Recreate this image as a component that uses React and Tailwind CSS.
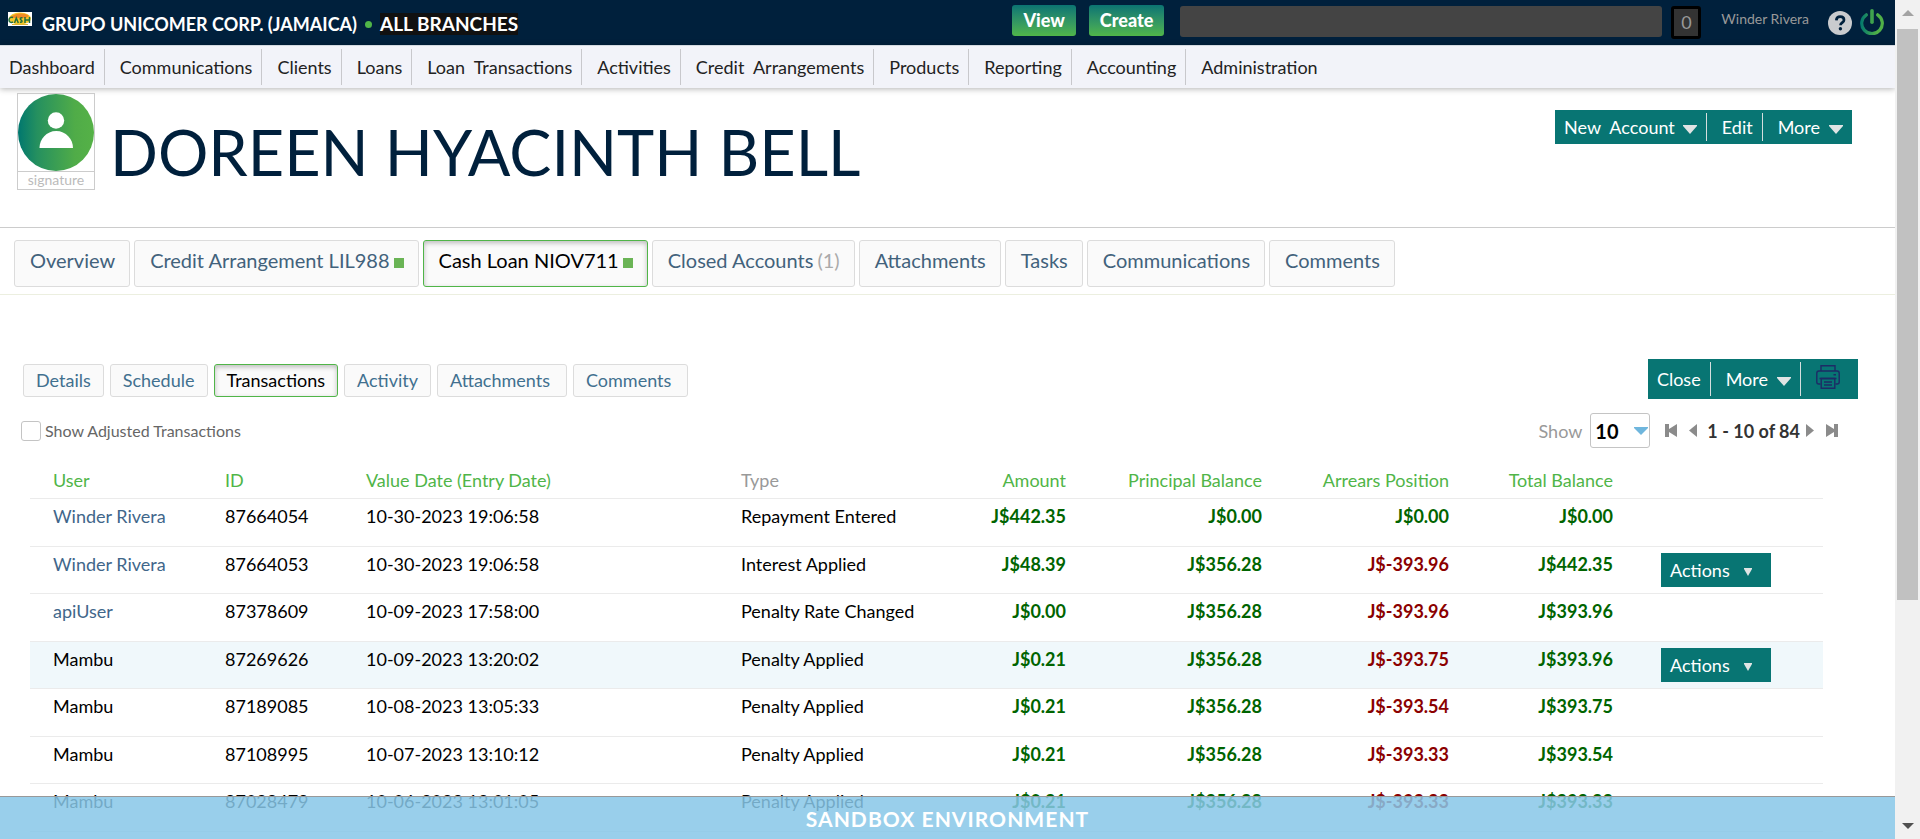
import React from "react";

const navItems = [
  "Dashboard",
  "Communications",
  "Clients",
  "Loans",
  "Loan\u00a0 Transactions",
  "Activities",
  "Credit\u00a0 Arrangements",
  "Products",
  "Reporting",
  "Accounting",
  "Administration",
];

const accountTabs = [
  { label: "Overview" },
  { label: "Credit Arrangement LIL988", status: true },
  { label: "Cash Loan NIOV711", status: true, active: true },
  { label: "Closed Accounts", count: "(1)" },
  { label: "Attachments" },
  { label: "Tasks" },
  { label: "Communications" },
  { label: "Comments" },
];

const loanTabs = [
  { label: "Details" },
  { label: "Schedule" },
  { label: "Transactions", active: true },
  { label: "Activity" },
  { label: "Attachments", wide: true },
  { label: "Comments", wide: true },
];

const rows = [
  { user: "Winder Rivera", link: true, id: "87664054", date: "10-30-2023 19:06:58", type: "Repayment Entered", amount: "J$442.35", principal: "J$0.00", arrears: "J$0.00", total: "J$0.00" },
  { user: "Winder Rivera", link: true, id: "87664053", date: "10-30-2023 19:06:58", type: "Interest Applied", amount: "J$48.39", principal: "J$356.28", arrears: "J$-393.96", total: "J$442.35", actions: true },
  { user: "apiUser", link: true, id: "87378609", date: "10-09-2023 17:58:00", type: "Penalty Rate Changed", amount: "J$0.00", principal: "J$356.28", arrears: "J$-393.96", total: "J$393.96" },
  { user: "Mambu", id: "87269626", date: "10-09-2023 13:20:02", type: "Penalty Applied", amount: "J$0.21", principal: "J$356.28", arrears: "J$-393.75", total: "J$393.96", actions: true, hover: true },
  { user: "Mambu", id: "87189085", date: "10-08-2023 13:05:33", type: "Penalty Applied", amount: "J$0.21", principal: "J$356.28", arrears: "J$-393.54", total: "J$393.75" },
  { user: "Mambu", id: "87108995", date: "10-07-2023 13:10:12", type: "Penalty Applied", amount: "J$0.21", principal: "J$356.28", arrears: "J$-393.33", total: "J$393.54" },
  { user: "Mambu", id: "87028479", date: "10-06-2023 13:01:05", type: "Penalty Applied", amount: "J$0.21", principal: "J$356.28", arrears: "J$-393.33", total: "J$393.33" },
];

function Caret({ className }) {
  return (
    <svg viewBox="0 0 14 9" className={className} preserveAspectRatio="none" aria-hidden="true">
      <path d="M0 0h14v1L7 9 0 1z" fill="currentColor" />
    </svg>
  );
}

function CashLogo() {
  return (
    <svg viewBox="0 0 24 14" className="h-3.5 w-6 shrink-0" aria-hidden="true">
      <rect width="24" height="14" fill="#fff" />
      <ellipse cx="12" cy="6.5" rx="11" ry="6" fill="#f5c92a" />
      <path d="M3 5c3-4 14-5 18-1l-3 2H5z" fill="#f08a24" />
      <path d="M5 5.5c-2.500-.8-4 .6-4 2.500s2 3 4 2M6.500 11l1.800-5 2 5M14.500 6c-2-.8-3 .8-1.500 1.800s1.500 3-1 2.200M17 5v6M21.500 5v6M17 8h4.500" fill="none" stroke="#24703c" strokeWidth="1.500" />
      <path d="M4 12.500h16" stroke="#e0b32e" strokeWidth="1" />
    </svg>
  );
}

function HelpIcon() {
  return (
    <svg viewBox="0 0 24 24" className="size-6" aria-hidden="true">
      <circle cx="12" cy="12" r="12" fill="#c9cbce" />
      <path d="M8.300 9.300c.2-2.400 1.800-3.600 3.900-3.600 2.200 0 3.800 1.300 3.800 3.200 0 2.700-3.500 2.700-3.500 5.300" fill="none" stroke="#00203c" strokeWidth="2.700" />
      <circle cx="12.400" cy="17.800" r="1.700" fill="#00203c" />
    </svg>
  );
}

function PowerIcon() {
  return (
    <svg viewBox="0 0 24 26" className="h-[26px] w-6" aria-hidden="true">
      <defs>
        <linearGradient id="power" x1="0" x2="24" y1="0" y2="0" gradientUnits="userSpaceOnUse">
          <stop offset="0" stopColor="#00776f" />
          <stop offset="0.700" stopColor="#50b047" />
        </linearGradient>
      </defs>
      <path d="M6.300 5.800a10.300 10.300 0 1 0 11.400 0" fill="none" stroke="url(#power)" strokeWidth="3.200" strokeLinecap="round" />
      <rect x="10.200" y="0" width="3.600" height="15" rx="1.800" fill="#3fa24e" />
    </svg>
  );
}

function Avatar() {
  return (
    <svg viewBox="0 0 76 77" className="block h-[77px] w-[76px]" aria-hidden="true">
      <defs>
        <linearGradient id="avatar" x1="0" x2="1" y1="0" y2="0">
          <stop offset="0" stopColor="#00776f" />
          <stop offset="0.250" stopColor="#25905f" />
          <stop offset="0.750" stopColor="#50ac48" />
          <stop offset="1" stopColor="#55b147" />
        </linearGradient>
      </defs>
      <ellipse cx="38" cy="38.500" rx="38" ry="38.500" fill="url(#avatar)" />
      <circle cx="38" cy="26.500" r="8.200" fill="#fff" />
      <path d="M21.500 54c0-9 7-17 16.700-17S55 45 55 54z" fill="#fff" />
    </svg>
  );
}

function PrinterIcon() {
  return (
    <svg viewBox="0 0 24 24" className="size-6" fill="none" stroke="#1d2b66" strokeWidth="1.400" aria-hidden="true">
      <path d="M5 6V.8h14V6" />
      <path d="M4.500 19H2.800C1.500 19 .8 18.200.8 17V8.200C.8 6.800 1.500 6 2.800 6h18.400c1.300 0 2 .8 2 2.200V17c0 1.200-.7 2-2 2h-1.700" />
      <path d="M5.200 13.500h13.600v9.700H5.200z" />
      <path d="M3.500 13.500h17M8 17h8M8 20h8M17.500 9.800h2.500" />
    </svg>
  );
}

function PagerIcon({ first, flip }) {
  return (
    <svg viewBox="0 0 12 13" className={first ? "h-[13px] w-3" : "h-[13px] w-2"} preserveAspectRatio="none" aria-hidden="true">
      <g fill="#8b8b8b" transform={flip ? "translate(12 0) scale(-1 1)" : undefined}>
        {first ? <path d="M0 0h4v5l8-5v13l-8-5v5H0z" /> : <path d="M12 0v13L0 6.500z" />}
      </g>
    </svg>
  );
}

function Header() {
  return (
    <header className="flex h-[45px] items-start bg-[#00203c] pr-[11px] text-white">
      <div className="flex min-w-0 flex-1 items-center pl-2 pt-3">
        <div className="self-start">
          <CashLogo />
        </div>
        <span className="ml-2.5 text-lg font-bold leading-6 whitespace-nowrap">GRUPO UNICOMER CORP. (JAMAICA)</span>
        <span className="mx-2 size-[7px] rounded-full bg-[#50b548]" />
        <span className="bg-[#111] text-[19px] font-bold leading-[22px] whitespace-nowrap">ALL BRANCHES</span>
      </div>
      <div className="flex items-start pt-[5px]">
        <button className="h-[31px] rounded-[3px] bg-linear-to-b from-[#0a7472] to-[#50b548] px-[11px] text-lg font-black leading-[31px]">View</button>
        <button className="ml-[13px] h-[31px] rounded-[3px] bg-linear-to-b from-[#0a7472] to-[#50b548] px-[11px] text-lg font-black leading-[31px]">Create</button>
        <input aria-label="Search" className="ml-4 mt-px h-[31px] w-[482px] rounded-[3px] bg-[#444] px-2 text-base text-white outline-none" />
        <button aria-label="Notifications" className="ml-[9px] mt-px h-[33px] w-[30px] rounded-[3px] border-3 border-black bg-[#333] text-lg leading-[27px] text-[#999]">0</button>
        <a href="#profile" className="ml-5 mt-[3px] text-sm leading-[22px] whitespace-nowrap text-[#999]">Winder Rivera</a>
        <button aria-label="Help" className="ml-[19px] mt-1.5"><HelpIcon /></button>
        <button aria-label="Log out" className="ml-2 mt-1"><PowerIcon /></button>
      </div>
    </header>
  );
}

function Nav() {
  return (
    <nav className="flex h-[43px] border-t border-[#d3d9e0] bg-[#f2f3f9] pt-[3px] shadow-[0_1px_6px_rgba(0,0,0,0.3)]">
      {navItems.map((item) => (
        <a key={item} href="#nav" className="h-9 border-r border-[#c8c8cc] pl-[15px] pr-[9px] text-lg leading-9 whitespace-nowrap text-[#222] first:pl-[9px] last:border-r-0">
          {item}
        </a>
      ))}
    </nav>
  );
}

function Profile() {
  return (
    <section className="flex items-start border-b border-[#ccc] pb-9 pl-[17px] pr-[43px] pt-[5px]">
      <div className="w-[78px] shrink-0">
        <div className="border border-[#ccc]"><Avatar /></div>
        <div className="-mt-px h-[19px] border border-[#ccc] text-center text-sm leading-4 text-[#bbb]">signature</div>
      </div>
      <h1 className="ml-[15px] flex-1 pt-5 text-[63px] leading-[78px] text-[#00203c]">DOREEN HYACINTH BELL</h1>
      <div className="mt-[17px] flex h-[34px] items-center bg-[#087573] text-lg text-white">
        <button className="flex h-7 items-center gap-2 border-r border-[#d5dede] px-[9px] whitespace-nowrap">
          {"New\u00a0 Account"}
          <Caret className="mt-1 h-[9px] w-3.5 text-[#e0e4e4]" />
        </button>
        <button className="h-7 border-r border-[#d5dede] pl-[15px] pr-[9px]">Edit</button>
        <button className="flex h-7 items-center gap-[9px] pl-[15px] pr-[9px]">
          More
          <Caret className="mt-1 h-[9px] w-3.5 text-[#e0e4e4]" />
        </button>
      </div>
    </section>
  );
}

function AccountTabs() {
  return (
    <div role="tablist" className="flex gap-1 border-b border-[#ecefe0] px-3.5 pb-[7px] pt-3">
      {accountTabs.map((t) => (
        <button
          key={t.label}
          role="tab"
          aria-selected={Boolean(t.active)}
          className={
            t.active
              ? "flex h-[47px] items-center rounded-[3px] border border-[#50b548] bg-[#fafafa] pl-[15px] pr-3.5 pb-2 text-xl whitespace-nowrap text-black shadow-[inset_0_2px_5px_rgba(0,0,0,0.25)]"
              : "flex h-[47px] items-center rounded-[3px] border border-[#dcdcdc] bg-[#fafafa] pl-[15px] pr-3.5 pb-2 text-xl whitespace-nowrap text-[#42627c]"
          }
        >
          {t.label}
          {t.count && <span className="ml-1 text-[#aaa]">{t.count}</span>}
          {t.status && <span className="ml-1 mt-1.5 size-2.5 bg-[#6ab455]" />}
        </button>
      ))}
    </div>
  );
}

function LoanToolbar() {
  return (
    <div className="flex items-start justify-between pl-[23px] pr-[37px] pt-16">
      <div role="tablist" className="flex gap-1.5 pt-[5px]">
        {loanTabs.map((t) => (
          <button
            key={t.label}
            role="tab"
            aria-selected={Boolean(t.active)}
            className={
              t.active
                ? "h-[33px] rounded-[3px] border border-[#50b548] bg-[#fafafa] px-3 text-lg leading-[31px] text-black shadow-[inset_0_2px_5px_rgba(0,0,0,0.25)]"
                : t.wide
                  ? "h-[33px] rounded-[3px] border border-[#dcdcdc] bg-[#fafafa] pl-3 pr-4 text-lg leading-[31px] text-[#41708f]"
                  : "h-[33px] rounded-[3px] border border-[#dcdcdc] bg-[#fafafa] px-3 text-lg leading-[31px] text-[#41708f]"
            }
          >
            {t.label}
          </button>
        ))}
      </div>
      <div className="flex h-10 items-start bg-[#087573] pt-[3px] text-lg text-white">
        <button className="h-[34px] border-r border-[#d5dede] px-[9px]">Close</button>
        <button className="flex h-[34px] items-center gap-[9px] border-r border-[#d5dede] pl-[15px] pr-[9px]">
          More
          <Caret className="mt-1 h-[9px] w-3.5 text-[#e0e4e4]" />
        </button>
        <button aria-label="Print" className="mt-[3px] pl-[15px] pr-[18px]"><PrinterIcon /></button>
      </div>
    </div>
  );
}

function Filters() {
  return (
    <div className="flex items-center justify-between pl-[21px] pr-[57px] pt-3.5">
      <div className="flex items-center gap-1">
        <input id="adjusted" type="checkbox" className="size-5 appearance-none rounded-[3px] border border-[#c4c4c4] bg-white" />
        <label htmlFor="adjusted" className="text-base text-[#666]">Show Adjusted Transactions</label>
      </div>
      <div className="flex items-center">
        <label htmlFor="pageSize" className="text-lg text-[#999]">Show</label>
        <div className="relative ml-2">
          <select id="pageSize" defaultValue="10" className="h-[35px] w-[60px] appearance-none rounded-[3px] border border-[#c4c4c4] bg-white pl-1 text-xl font-bold text-black">
            <option>10</option>
            <option>20</option>
            <option>50</option>
          </select>
          <Caret className="pointer-events-none absolute right-0.5 top-3.5 h-2 w-3.5 text-[#6fb6dd]" />
        </div>
        <button aria-label="First page" className="ml-[15px]"><PagerIcon first /></button>
        <button aria-label="Previous page" className="ml-3"><PagerIcon /></button>
        <span className="ml-2.5 mr-1.5 text-lg font-bold text-[#333]">1 - 10 of 84</span>
        <button aria-label="Next page"><PagerIcon flip /></button>
        <button aria-label="Last page" className="ml-3"><PagerIcon first flip /></button>
      </div>
    </div>
  );
}

function Money({ value }) {
  return (
    <td className={value.includes("-") ? "pt-[5px] text-right font-bold text-[#8b0000]" : "pt-[5px] text-right font-bold text-[#006400]"}>
      {value}
    </td>
  );
}

function Transactions() {
  return (
    <div className="pl-[30px] pr-[72px] pt-[15px]">
      <table className="w-full table-fixed border-collapse text-lg leading-6">
        <colgroup>
          <col className="w-[195px]" />
          <col className="w-[141px]" />
          <col className="w-[375px]" />
          <col className="w-[200px]" />
          <col className="w-[125px]" />
          <col className="w-[196px]" />
          <col className="w-[187px]" />
          <col className="w-[164px]" />
          <col />
        </colgroup>
        <thead>
          <tr className="h-[35px] border-b border-[#ebebeb] text-left text-[#50b548]">
            <th className="pl-[23px] font-normal">User</th>
            <th className="font-normal">ID</th>
            <th className="font-normal">Value Date (Entry Date)</th>
            <th className="font-normal text-[#999]">Type</th>
            <th className="text-right font-normal">Amount</th>
            <th className="text-right font-normal">Principal Balance</th>
            <th className="text-right font-normal">Arrears Position</th>
            <th className="text-right font-normal">Total Balance</th>
            <th aria-label="Actions" />
          </tr>
        </thead>
        <tbody>
          {rows.map((r) => (
            <tr
              key={r.id}
              className={
                r.hover
                  ? "border-b border-[#ebebeb] bg-[#f0f8fb] align-top odd:h-12 even:h-[47px]"
                  : "border-b border-[#ebebeb] align-top odd:h-12 even:h-[47px]"
              }
            >
              <td className="pl-[23px] pt-[5px]">
                {r.link ? <a href="#user" className="text-[#41668a]">{r.user}</a> : r.user}
              </td>
              <td className="pt-[5px]">{r.id}</td>
              <td className="pt-[5px]">{r.date}</td>
              <td className="pt-[5px]">{r.type}</td>
              <Money value={r.amount} />
              <Money value={r.principal} />
              <Money value={r.arrears} />
              <Money value={r.total} />
              <td className="pl-12 pt-1.5">
                {r.actions && (
                  <button className="flex h-[34px] w-[110px] items-center gap-3.5 bg-[#087573] pl-[9px] text-lg text-white">
                    Actions
                    <Caret className="mt-1 size-2 text-[#e0e4e4]" />
                  </button>
                )}
              </td>
            </tr>
          ))}
        </tbody>
      </table>
    </div>
  );
}

export default function App() {
  return (
    <div className="flex h-screen overflow-hidden bg-white font-['Lato',sans-serif] text-black">
      <div className="relative min-w-0 flex-1 overflow-hidden">
        <Header />
        <Nav />
        <main>
          <Profile />
          <AccountTabs />
          <LoanToolbar />
          <Filters />
          <Transactions />
        </main>
        <footer className="absolute inset-x-0 bottom-0 h-[43px] border-t border-[#999] bg-[#87c7e7]/85 text-center text-[21px] font-bold leading-[43px] tracking-wider text-white">
          SANDBOX ENVIRONMENT
        </footer>
      </div>
      <div className="flex w-[25px] shrink-0 flex-col items-center bg-[#f1f1f1]" aria-hidden="true">
        <svg viewBox="0 0 12 6" className="mt-2.5 mb-[13px] h-1.5 w-3 shrink-0"><path d="M6 0l6 6H0z" fill="#a3a3a3" /></svg>
        <div className="h-[68%] w-[21px] bg-[#c1c1c1]" />
        <svg viewBox="0 0 12 6" className="mt-auto mb-2.5 h-1.5 w-3 shrink-0"><path d="M0 0h12L6 6z" fill="#505050" /></svg>
      </div>
    </div>
  );
}
